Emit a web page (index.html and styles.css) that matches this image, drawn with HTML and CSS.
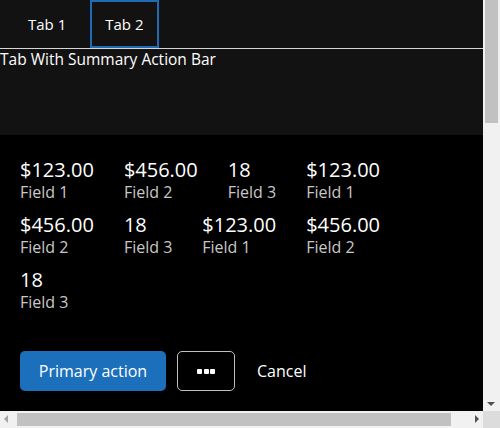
FILE: index.html
```html
<!DOCTYPE html>
<html>
<head>
<meta charset="utf-8">
<link rel="stylesheet" href="styles.css">
</head>
<body>
<div class="page">
  <div class="header">
    <div class="tabs">
      <div class="tab">Tab 1</div>
      <div class="tab active">Tab 2</div>
    </div>
    <div class="title">Tab With Summary Action Bar</div>
  </div>
  <div class="summary">
    <div class="fields">
      <div class="field"><div class="value">$123.00</div><div class="label">Field 1</div></div>
      <div class="field"><div class="value">$456.00</div><div class="label">Field 2</div></div>
      <div class="field"><div class="value">18</div><div class="label">Field 3</div></div>
      <div class="field"><div class="value">$123.00</div><div class="label">Field 1</div></div>
      <div class="field"><div class="value">$456.00</div><div class="label">Field 2</div></div>
      <div class="field"><div class="value">18</div><div class="label">Field 3</div></div>
      <div class="field"><div class="value">$123.00</div><div class="label">Field 1</div></div>
      <div class="field"><div class="value">$456.00</div><div class="label">Field 2</div></div>
      <div class="field"><div class="value">18</div><div class="label">Field 3</div></div>
    </div>
    <div class="actions">
      <button class="btn primary">Primary action</button>
      <button class="btn more" aria-label="More"><span class="dots"><i></i><i></i><i></i></span></button>
      <button class="btn link">Cancel</button>
    </div>
  </div>
</div>
<div class="vscroll">
  <div class="vthumb"></div>
  <div class="arrow down"></div>
</div>
<div class="hscroll">
  <div class="arrow left"></div>
  <div class="hthumb"></div>
  <div class="arrow right"></div>
</div>
<div class="corner"></div>
</body>
</html>
```
FILE: styles.css
```css
html, body {
  margin: 0;
  padding: 0;
  background: #000;
  overflow: hidden;
}
body {
  font-family: "Open Sans", "Noto Sans", sans-serif;
  color: #fff;
}
.page {
  width: 483px;
  height: 428px;
  overflow: hidden;
}
.header {
  background: #121212;
  height: 135px;
}
.tabs {
  display: flex;
  height: 48px;
  border-bottom: 1px solid #d6d6d6;
  padding-left: 13px;
  gap: 9px;
}
.tab {
  box-sizing: border-box;
  height: 48px;
  padding: 0 13px;
  display: flex;
  align-items: center;
  font-size: 15px;
  border: 2px solid transparent;
}
.tab.active {
  border-color: #1f6cb5;
}
.title {
  font-size: 15.5px;
  line-height: 20px;
}
.summary {
  box-sizing: border-box;
  padding: 23px 40px 20px 20px;
}
.fields {
  display: flex;
  flex-wrap: wrap;
}
.field {
  padding-right: 30px;
  margin-bottom: 11px;
}
.value {
  font-size: 20px;
  line-height: 24px;
}
.label {
  font-size: 16px;
  line-height: 20px;
  color: #c8c8c8;
}
.actions {
  display: flex;
  align-items: center;
  margin-top: 28px;
  gap: 11px;
}
.btn {
  font-family: inherit;
  font-size: 16px;
  height: 40px;
  border-radius: 5px;
  color: #fff;
  cursor: pointer;
}
.primary {
  background: #1b6fbb;
  border: none;
  width: 146px;
}
.more {
  background: #000;
  border: 1px solid #c0c0c0;
  width: 58px;
  display: flex;
  align-items: center;
  justify-content: center;
}
.dots {
  display: flex;
  gap: 1.5px;
}
.dots i {
  width: 5px;
  height: 5px;
  border-radius: 1px;
  background: #fff;
  display: block;
}
.link {
  background: none;
  border: none;
  padding: 0 11px;
}

/* Scrollbars drawn over the viewport edges */
.vscroll {
  position: fixed;
  top: 0;
  right: 0;
  width: 17px;
  height: 411px;
  background: #f1f1f1;
}
.vthumb {
  position: absolute;
  top: 0;
  left: 2px;
  width: 13px;
  height: 123px;
  background: #c1c1c1;
}
.hscroll {
  position: fixed;
  left: 0;
  bottom: 0;
  width: 483px;
  height: 17px;
  background: #f1f1f1;
}
.hthumb {
  position: absolute;
  left: 17px;
  top: 2px;
  width: 434px;
  height: 13px;
  background: #c1c1c1;
}
.corner {
  position: fixed;
  right: 0;
  bottom: 0;
  width: 17px;
  height: 17px;
  background: #dcdcdc;
}
.arrow {
  position: absolute;
  width: 0;
  height: 0;
  border: 4px solid transparent;
}
.arrow.down {
  left: 4px;
  bottom: 5px;
  border-top: 4px solid #505050;
  border-bottom: 0;
}
.arrow.left {
  left: 4px;
  top: 4px;
  border-right: 4px solid #a3a3a3;
  border-left: 0;
}
.arrow.right {
  right: 4px;
  top: 4px;
  border-left: 4px solid #505050;
  border-right: 0;
}
```
